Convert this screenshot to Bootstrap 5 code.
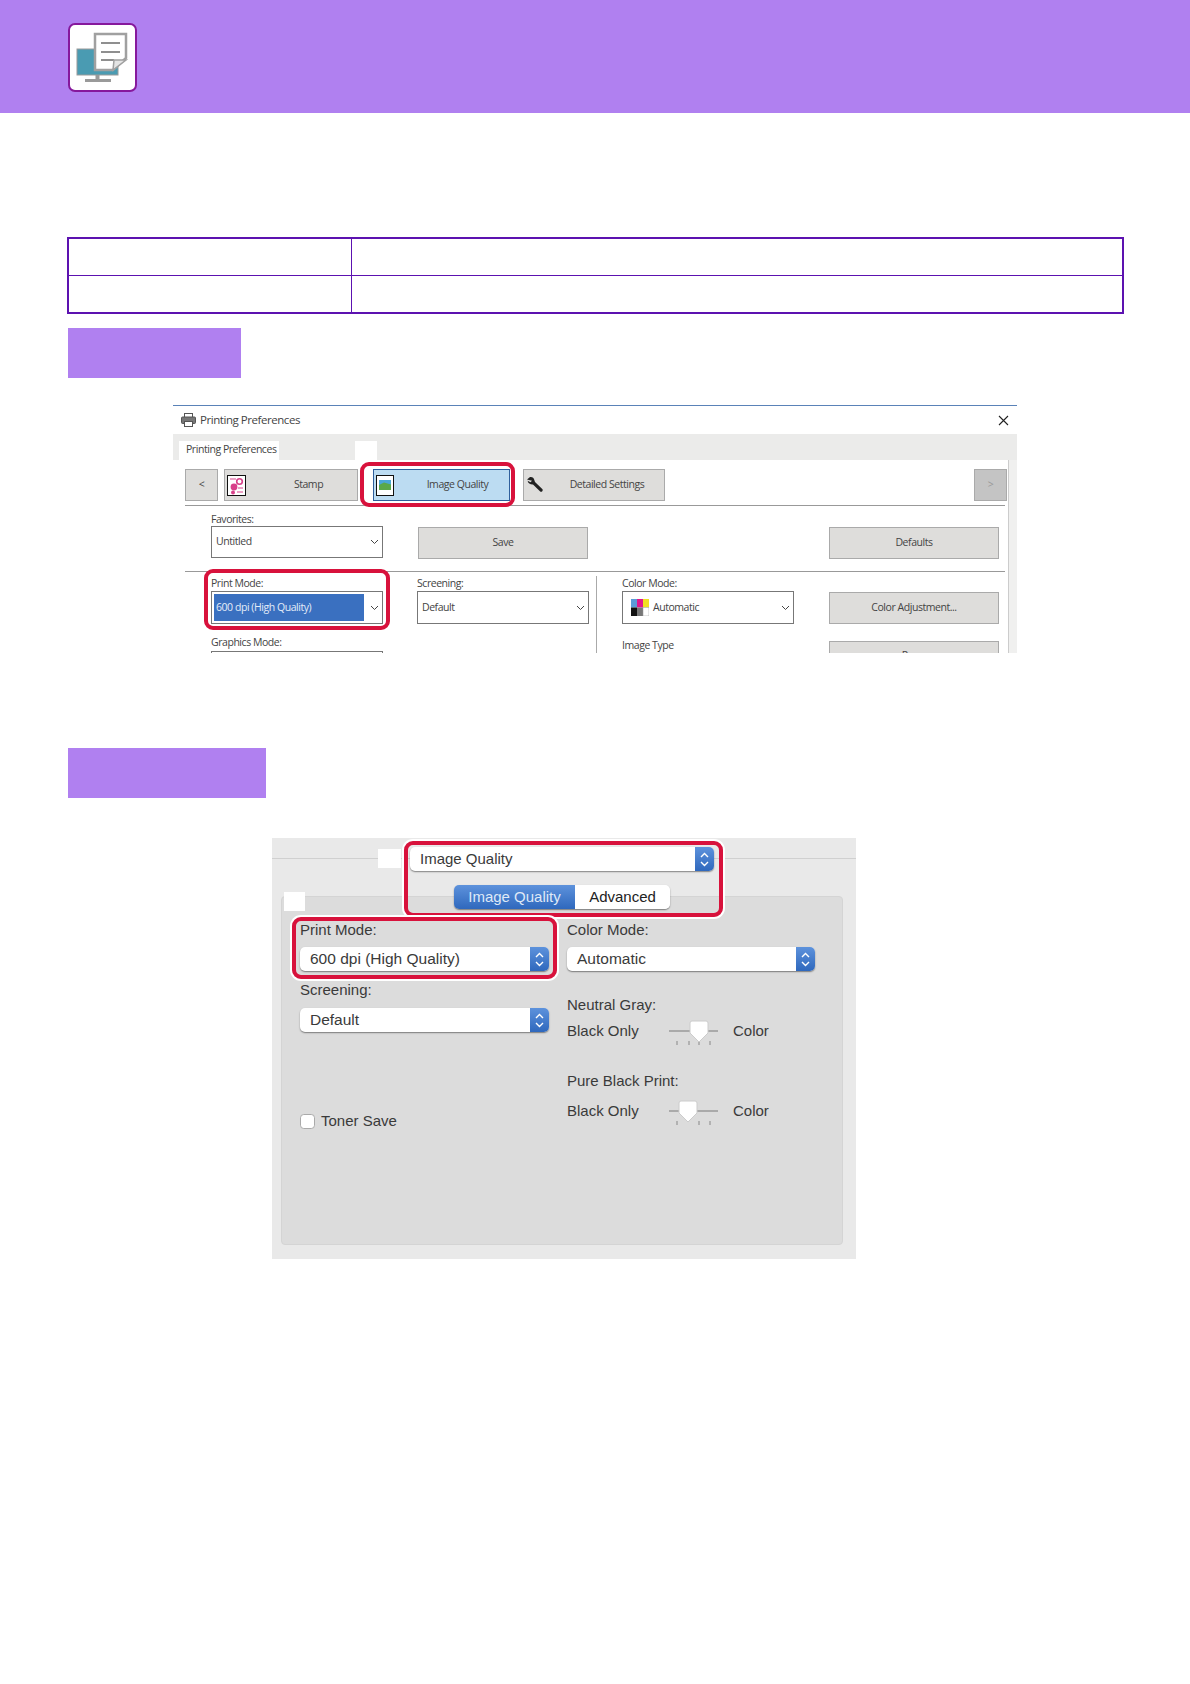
<!DOCTYPE html>
<html lang="en">
<head>
<meta charset="utf-8">
<title>Printing Preferences</title>
<link href="https://cdn.jsdelivr.net/npm/bootstrap@5.3.0/dist/css/bootstrap.min.css" rel="stylesheet">
<style>
body{background:#fff;margin:0;font-family:"Liberation Sans",sans-serif}
.top-band{height:113px;background:#b080f0;padding:1px 0 0 68px}
.icon-box{width:69px;height:69px;background:#fff;border:2px solid #86189c;border-radius:7px}
.page-body{padding:124px 67px 0 67px}
.spec-table{width:1057px;border:2.5px solid #5c12b0;margin:0;table-layout:fixed}
.spec-table td{border:1.5px solid #5c12b0;padding:0;height:37.5px;background:#fff}
.spec-table td:first-child{width:283px}
.os-band{height:50px;background:#b080f0;margin-left:1px}
.os-band-a{width:173px;margin-top:14px}
.os-band-b{width:198px;margin-top:95px}

/* Windows dialog */
.win{width:844px;height:248px;margin:27px auto 0;overflow:hidden;position:relative;border-top:1px solid #5a82b8;background:#fff;font-family:"Open Sans",sans-serif;font-size:10.5px;color:#444;letter-spacing:-.45px}
.win-title{height:28px;padding:0 8px;font-size:11.5px}
.win-tabs{height:26px;background:#ebebea;padding:7px 0 0 6px}
.win-tab{width:100px;height:19px;background:#fff;padding-left:7px;line-height:17px;white-space:nowrap}
.win-patch{width:22px;height:19px;background:#fff;margin-left:76px}
.win-panel{height:193px;background:#f0f0ef;overflow:hidden}
.win-inner{width:836px;height:193px;background:#fff;border-right:1px solid #ccc;padding:9px 0 0 12px}
.tool{height:32px;border:1px solid #aaa;background:#dedddb;border-radius:0;padding:0;font-size:10.5px;color:#444;letter-spacing:-.45px;flex:none}
.tool-back{width:33px}
.tool-stamp{width:134px;margin-left:6px}
.tool-iq{width:137px;margin-left:15px;background:#bcdcf2;border-color:#2f5f9c}
.tool-ds{width:142px;margin-left:13px}
.tool-next{width:33px;margin-left:309px;background:#c4c4c4;color:#999}
.tool-cap{flex:1;text-align:center;white-space:nowrap}
.tool-stamp .tool-cap{padding-left:14px}
.tool-iq .tool-cap{padding-left:12px}
.tool-ds .tool-cap{padding-left:6px}
.tool-ic{margin-left:2px;flex:none}
.rule{width:820px;height:1px;background:#999}
.rule-a{margin-top:4px}
.lab{height:14px;line-height:14px;white-space:nowrap}
.lab-fav{margin-top:6px}
.cell{flex:none;width:172px}
.combo{height:33px;border:1px solid #777;background:#fff;padding:0 3px 0 4px;margin-top:1px}
.combo-fav{height:32px;margin-top:0}
.combo-txt{flex:1;white-space:nowrap}
.sel-fill{flex:1;height:27px;background:#3a70c0;color:#e4ecf8;margin-left:-2px;margin-right:6px;padding-left:2px;white-space:nowrap}
.fav-row{padding-left:26px;height:65px}
.form-zone{padding-left:26px;margin-top:4px}
.wbtn{width:170px;height:32px;border:1px solid #aaa;background:#dedddb;border-radius:0;padding:0;font-size:10.5px;color:#444;letter-spacing:-.45px;flex:none}
.wbtn-save{margin:21px 0 0 35px}
.wbtn-def{margin:21px 0 0 241px}
.wbtn-next{margin-top:17px;padding-bottom:3px}
.vsep{width:1px;background:#aaa;height:80px;margin:0 25px 0 7px;flex:none}
.col-win{flex:none;width:172px}
.col-scr{margin-left:34px}
.col-btn{flex:none;width:170px;margin-left:35px;padding-top:16px}
.sp-lab{margin-top:11px}
.sp-type{margin-top:14px}
.clip-top{height:30px;border:1px solid #777;background:#fff;margin-top:2px}
.red-ring{position:absolute;border:4px solid #d8123c;pointer-events:none}
.ring-a{left:187px;top:56px;width:155px;height:45px;border-radius:9px}
.ring-b{left:31px;top:163px;width:186px;height:61px;border-radius:9px}

/* Mac dialog */
.mac{width:584px;height:421px;margin:40px 0 0 205px;position:relative;background:#e9e9e9;font-family:"Liberation Sans",sans-serif;font-size:15px;color:#3a3a3a;overflow:hidden}
.mac-line{position:absolute;left:0;right:0;top:20px;height:1px;background:#d0d0d0}
.mac-head{position:relative;height:59px;padding-top:9px}
.mac-patch-a{width:23px;height:19px;background:#fff;margin-left:106px;margin-top:2px;flex:none}
.mac-sel{height:24px;border-radius:5px;background:#fff;box-shadow:0 1px 1.5px rgba(0,0,0,.45);padding-left:10px;overflow:hidden;white-space:nowrap}
.mac-panel .mac-sel{font-size:15.5px}
.mac-sel-top{width:304px;margin-left:9px}
.mac-arrows{width:19px;height:24px;background:linear-gradient(#5d92dc,#2f68bd);flex:none}
.mac-seg{position:absolute;left:182px;top:47px;z-index:1;width:216px;height:24px;border-radius:5px;overflow:hidden;box-shadow:0 1px 1.5px rgba(0,0,0,.45)}
.seg-on{width:121px;border-radius:0;padding:0;border:0;background:linear-gradient(#5d92dc,#2f68bd);color:#dfe9f7;font-size:15px}
.seg-off{flex:1;border-radius:0;padding:0;border:0;background:#fff;color:#222;font-size:15px}
.mac-panel{position:relative;margin:-1px 13px 0 9px;height:349px;background:#dcdcdc;border-radius:4px;border:1px solid #d4d4d4;padding:24px 0 0 18px}
.mac-patch-b{position:absolute;left:2px;top:-5px;width:21px;height:19px;background:#fff}
.mac-left{width:249px;flex:none}
.mac-right{width:248px;margin-left:18px;flex:none}
.mac-lab{height:18px;line-height:18px;white-space:nowrap}
.sp-8{margin-top:8px}
.sp-9{margin-top:9px}
.sp-10{margin-top:10px}
.sp-25{margin-top:25px}
.sp-5{margin-top:5px}
.sp-29{margin-top:29px}
.toner-row{margin-top:78px}
.toner-txt{margin-left:6px}
.mac-tick{margin:0;width:15px;height:15px;border-color:#aaa;border-radius:3px;flex:none}
.slide-row{height:24px}
.slide-txt{width:102px;flex:none}
.slide-svg{flex:none;margin-right:15px}
.red-ring-mac{position:absolute;z-index:2;border:4px solid #d8123c;box-shadow:0 0 0 2px #fff;pointer-events:none}
.ring-c{left:132px;top:3px;width:319px;height:76px;border-radius:9px}
.ring-d{left:20px;top:79px;width:265px;height:62px;border-radius:9px}
</style>
</head>
<body>
<header class="top-band d-flex align-items-center">
  <div class="icon-box d-flex align-items-center justify-content-center">
    <svg width="65" height="65" viewBox="2 2 65 65" aria-hidden="true">
      <rect x="9" y="26" width="41" height="26" fill="#4a9bb2" stroke="#9a9a9a" stroke-width="1"/>
      <rect x="27.5" y="52" width="4" height="6" fill="#9a9a9a"/>
      <rect x="17" y="56" width="26" height="3" fill="#9a9a9a"/>
      <path d="M27 11H58V35L45 47H27Z" fill="#fff" stroke="#a0a0a0" stroke-width="2.5"/>
      <path d="M33 20H52M33 29H52M33 37H46" stroke="#8f8f8f" stroke-width="2"/>
      <path d="M45 47L46 37H58Z" fill="#e4e4e4" stroke="#a0a0a0" stroke-width="1.5"/>
    </svg>
  </div>
</header>

<main class="page-body">
  <table class="table spec-table">
    <tbody>
      <tr><td></td><td></td></tr>
      <tr><td></td><td></td></tr>
    </tbody>
  </table>

  <div class="os-band os-band-a"></div>

  <section class="win">
    <div class="win-title d-flex align-items-center">
      <svg class="me-1" width="15" height="14" viewBox="0 0 15 14" aria-hidden="true">
        <rect x="3.500" y="0.500" width="8" height="4" fill="#fff" stroke="#555"/>
        <rect x="0.500" y="4" width="14" height="6.500" rx="1" fill="#777" stroke="#555"/>
        <rect x="3.500" y="8.500" width="8" height="5" fill="#fff" stroke="#555"/>
      </svg>
      <span>Printing Preferences</span>
      <svg class="ms-auto" width="11" height="11" viewBox="0 0 11 11" aria-hidden="true"><path d="M1 1L10 10M10 1L1 10" stroke="#222" stroke-width="1.1"/></svg>
    </div>
    <div class="win-tabs d-flex">
      <div class="win-tab">Printing Preferences</div>
      <div class="win-patch"></div>
    </div>
    <div class="win-panel">
      <div class="win-inner">
        <div class="d-flex">
          <button class="btn tool tool-back" type="button">&lt;</button>
          <button class="btn tool tool-stamp d-flex align-items-center" type="button">
            <svg class="tool-ic" width="19" height="21" viewBox="0 0 19 21" aria-hidden="true">
              <rect x=".5" y=".5" width="18" height="20" fill="#fff" stroke="#111"/>
              <circle cx="12.500" cy="6.500" r="2.800" fill="none" stroke="#d8408a" stroke-width="1.600"/>
              <circle cx="7" cy="12" r="3.400" fill="#d8408a"/>
              <circle cx="6" cy="17.500" r="2" fill="#d8408a"/>
              <path d="M3 4H9M11 13H16M10 17H16" stroke="#d8408a"/>
            </svg>
            <span class="tool-cap">Stamp</span>
          </button>
          <button class="btn tool tool-iq d-flex align-items-center" type="button">
            <svg class="tool-ic" width="18" height="21" viewBox="0 0 18 21" aria-hidden="true">
              <rect x=".5" y=".5" width="17" height="20" fill="#fff" stroke="#111"/>
              <rect x="3" y="5" width="12" height="5" fill="#4aa7d8"/>
              <path d="M3 10L8 7.500L15 9.500V15H3Z" fill="#5aa84a"/>
            </svg>
            <span class="tool-cap">Image Quality</span>
          </button>
          <button class="btn tool tool-ds d-flex align-items-center" type="button">
            <svg class="tool-ic" width="18" height="18" viewBox="0 0 18 18" aria-hidden="true">
              <path d="M1 3.500L4 1C6 .6 8 1.600 8.300 4L9 6L16.500 13.200C17.400 14.400 15.600 16.600 14.200 15.600L7 8.600C4.500 8.800 2 7.500 1.600 4.800L4.500 6.200L6 4.800Z" fill="#222"/>
            </svg>
            <span class="tool-cap">Detailed Settings</span>
          </button>
          <button class="btn tool tool-next" type="button">&gt;</button>
        </div>
        <div class="rule rule-a"></div>
        <div class="fav-row d-flex">
          <div class="cell">
            <div class="lab lab-fav">Favorites:</div>
            <div class="combo combo-fav d-flex align-items-center">
              <span class="combo-txt">Untitled</span>
              <svg width="9" height="6" viewBox="0 0 9 6" aria-hidden="true"><path d="M1 1L4.500 4.500L8 1" fill="none" stroke="#444"/></svg>
            </div>
          </div>
          <button class="btn wbtn wbtn-save" type="button">Save</button>
          <button class="btn wbtn wbtn-def" type="button">Defaults</button>
        </div>
        <div class="rule"></div>
        <div class="form-zone d-flex">
          <div class="col-win">
            <div class="lab">Print Mode:</div>
            <div class="combo d-flex align-items-center">
              <span class="sel-fill d-flex align-items-center">600 dpi (High Quality)</span>
              <svg width="9" height="6" viewBox="0 0 9 6" aria-hidden="true"><path d="M1 1L4.500 4.500L8 1" fill="none" stroke="#444"/></svg>
            </div>
            <div class="lab sp-lab">Graphics Mode:</div>
            <div class="clip-top"></div>
          </div>
          <div class="col-win col-scr">
            <div class="lab">Screening:</div>
            <div class="combo d-flex align-items-center">
              <span class="combo-txt">Default</span>
              <svg width="9" height="6" viewBox="0 0 9 6" aria-hidden="true"><path d="M1 1L4.500 4.500L8 1" fill="none" stroke="#444"/></svg>
            </div>
          </div>
          <div class="vsep"></div>
          <div class="col-win">
            <div class="lab">Color Mode:</div>
            <div class="combo d-flex align-items-center ps-2">
              <svg class="me-1" width="18" height="17" viewBox="0 0 18 17" aria-hidden="true">
                <rect width="6" height="8.500" fill="#5b9bd8"/><rect x="6" width="6" height="8.500" fill="#e0188c"/><rect x="12" width="6" height="8.500" fill="#f0e020"/>
                <rect y="8.500" width="6" height="8.500" fill="#111"/><rect x="6" y="8.500" width="6" height="8.500" fill="#777"/><rect x="12" y="8.500" width="6" height="8.500" fill="#fff" stroke="#999" stroke-width=".5"/>
              </svg>
              <span class="combo-txt">Automatic</span>
              <svg width="9" height="6" viewBox="0 0 9 6" aria-hidden="true"><path d="M1 1L4.500 4.500L8 1" fill="none" stroke="#444"/></svg>
            </div>
            <div class="lab sp-type">Image Type</div>
          </div>
          <div class="col-btn">
            <button class="btn wbtn" type="button">Color Adjustment...</button>
            <button class="btn wbtn wbtn-next" type="button">Press</button>
          </div>
        </div>
      </div>
    </div>
    <div class="red-ring ring-a"></div>
    <div class="red-ring ring-b"></div>
  </section>

  <div class="os-band os-band-b"></div>

  <section class="mac">
    <div class="mac-line"></div>
    <div class="mac-head d-flex">
      <div class="mac-patch-a"></div>
      <div class="mac-sel mac-sel-top d-flex align-items-center justify-content-between">
        <span>Image Quality</span>
        <span class="mac-arrows d-flex align-items-center justify-content-center">
          <svg width="9" height="15" viewBox="0 0 9 15" aria-hidden="true"><path d="M1 5L4.500 1.500L8 5M1 10L4.500 13.500L8 10" fill="none" stroke="#fff" stroke-width="1.400"/></svg>
        </span>
      </div>
    </div>
    <div class="mac-panel d-flex">
      <div class="mac-patch-b"></div>
      <div class="mac-left">
        <div class="mac-lab">Print Mode:</div>
        <div class="mac-sel sp-8 d-flex align-items-center justify-content-between">
          <span>600 dpi (High Quality)</span>
          <span class="mac-arrows d-flex align-items-center justify-content-center">
            <svg width="9" height="15" viewBox="0 0 9 15" aria-hidden="true"><path d="M1 5L4.500 1.500L8 5M1 10L4.500 13.500L8 10" fill="none" stroke="#fff" stroke-width="1.400"/></svg>
          </span>
        </div>
        <div class="mac-lab sp-10">Screening:</div>
        <div class="mac-sel sp-9 d-flex align-items-center justify-content-between">
          <span>Default</span>
          <span class="mac-arrows d-flex align-items-center justify-content-center">
            <svg width="9" height="15" viewBox="0 0 9 15" aria-hidden="true"><path d="M1 5L4.500 1.500L8 5M1 10L4.500 13.500L8 10" fill="none" stroke="#fff" stroke-width="1.400"/></svg>
          </span>
        </div>
        <div class="toner-row d-flex align-items-center">
          <input class="form-check-input mac-tick" type="checkbox" aria-label="Toner Save">
          <span class="toner-txt">Toner Save</span>
        </div>
      </div>
      <div class="mac-right">
        <div class="mac-lab">Color Mode:</div>
        <div class="mac-sel sp-8 d-flex align-items-center justify-content-between">
          <span>Automatic</span>
          <span class="mac-arrows d-flex align-items-center justify-content-center">
            <svg width="9" height="15" viewBox="0 0 9 15" aria-hidden="true"><path d="M1 5L4.500 1.500L8 5M1 10L4.500 13.500L8 10" fill="none" stroke="#fff" stroke-width="1.400"/></svg>
          </span>
        </div>
        <div class="mac-lab sp-25">Neutral Gray:</div>
        <div class="slide-row sp-5 d-flex align-items-center">
          <span class="slide-txt">Black Only</span>
          <svg class="slide-svg" width="49" height="28" viewBox="0 0 49 28" aria-hidden="true">
            <path d="M0 14H49" stroke="#aaa" stroke-width="2"/>
            <path d="M8 24V28M20 24V28M30 25V28M41 24V28" stroke="#888"/>
            <path d="M21 6Q21 4 23 4H37Q39 4 39 6V16L30 25L21 16Z" fill="#fff" stroke="#ccc"/>
          </svg>
          <span>Color</span>
        </div>
        <div class="mac-lab sp-29">Pure Black Print:</div>
        <div class="slide-row sp-9 d-flex align-items-center">
          <span class="slide-txt">Black Only</span>
          <svg class="slide-svg" width="49" height="28" viewBox="0 0 49 28" aria-hidden="true">
            <path d="M0 14H49" stroke="#aaa" stroke-width="2"/>
            <path d="M8 24V28M30 24V28M41 24V28" stroke="#888"/>
            <path d="M10 6Q10 4 12 4H26Q28 4 28 6V16L19 25L10 16Z" fill="#fff" stroke="#ccc"/>
          </svg>
          <span>Color</span>
        </div>
      </div>
    </div>
    <div class="mac-seg d-flex">
      <button class="btn seg-on" type="button">Image Quality</button>
      <button class="btn seg-off" type="button">Advanced</button>
    </div>
    <div class="red-ring-mac ring-c"></div>
    <div class="red-ring-mac ring-d"></div>
  </section>
</main>
</body>
</html>
